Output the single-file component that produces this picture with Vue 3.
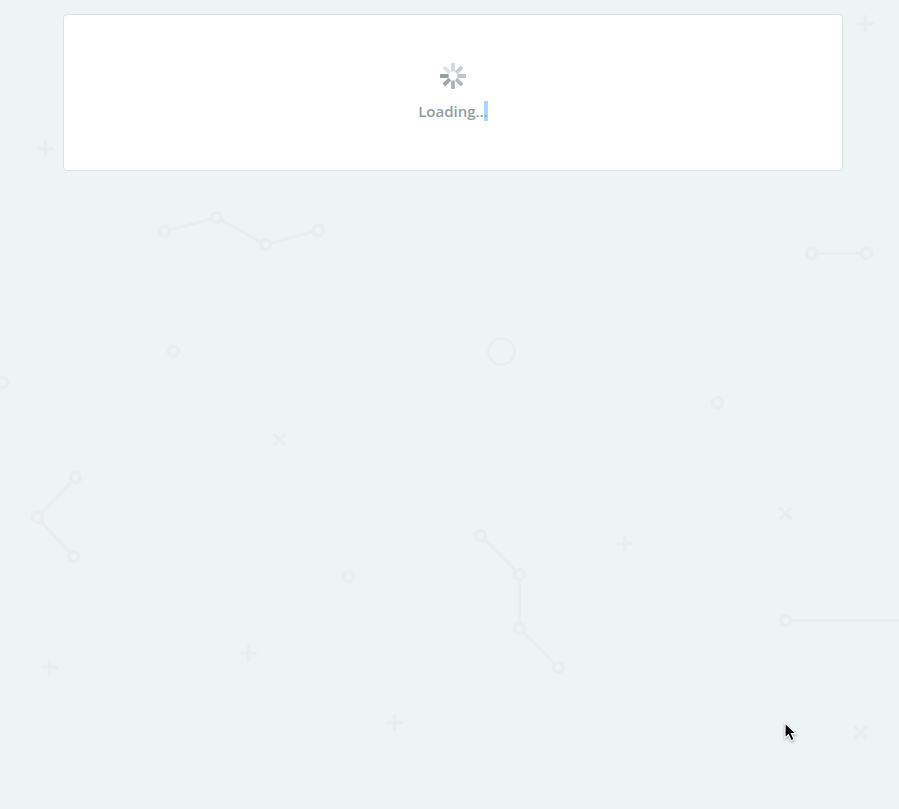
<script setup>
const chains = [
  [[164, 231], [216, 217], [265, 244], [318, 230]],
  [[811, 253], [866, 253]],
  [[75, 477], [37, 517], [73, 556]],
  [[480, 535], [519, 574], [519, 628], [558, 667]],
  [[785, 620], [920, 620]],
  [[173, 351]],
  [[2, 382]],
  [[717, 402]],
  [[348, 576]],
]
const segments = chains.flatMap((points) =>
  points.slice(1).map(([x2, y2], i) => {
    const [x1, y1] = points[i]
    const length = Math.hypot(x2 - x1, y2 - y1)
    const dx = ((x2 - x1) / length) * 6
    const dy = ((y2 - y1) / length) * 6
    return { x1: x1 + dx, y1: y1 + dy, x2: x2 - dx, y2: y2 - dy }
  })
)
const nodes = chains.flat()
const pluses = [[865, 23], [45, 148], [624, 543], [248, 653], [49, 667], [394, 722]]
const crosses = [[279, 439], [785, 513], [860, 732]]
const spokes = ['#d6dadc', '#c9ced1', '#bfc5c8', '#b2babd', '#a9b2b5', '#9ea8ac', '#929da1', '#dfe3e4']
</script>

<template>
  <main class="page">
    <svg class="pattern" aria-hidden="true">
      <g transform="translate(.5 .5)">
        <line v-for="(s, i) in segments" :key="'s' + i" v-bind="s" />
        <circle v-for="([x, y], i) in nodes" :key="'n' + i" :cx="x" :cy="y" r="5" class="node" />
        <circle cx="501" cy="351" r="13" />
        <path v-for="([x, y], i) in pluses" :key="'p' + i" class="mark" :d="`M${x - 7} ${y}h14M${x} ${y - 7}v14`" />
        <path v-for="([x, y], i) in crosses" :key="'x' + i" class="mark" :d="`M${x - 5} ${y - 5}l10 10M${x + 5} ${y - 5}l-10 10`" />
      </g>
    </svg>

    <section class="card" role="status">
      <svg class="spinner" viewBox="0 0 26 26" aria-hidden="true">
        <rect
          v-for="(color, i) in spokes"
          :key="i"
          x="11.1"
          y="0"
          width="3.8"
          height="8.6"
          rx="0.7"
          :fill="color"
          :transform="`rotate(${i * 45} 13 13)`"
        />
      </svg>
      <p class="message">Loading..<span class="selected">.</span></p>
    </section>

    <svg class="cursor" viewBox="0 0 14 22" aria-hidden="true">
      <path d="M1 1v15l3.5-3.2 2.6 6 3-1.3-2.6-5.8h4.7z" fill="#000" stroke="#fff" stroke-width="1.2" />
    </svg>
  </main>
</template>

<style>
body {
  margin: 0;
  background: #eef3f4;
}
</style>

<style scoped>
.page {
  position: relative;
  box-sizing: border-box;
  min-height: 100vh;
  padding: 14px 56px 14px 63px;
  overflow: hidden;
  font-family: "Open Sans", "Noto Sans", sans-serif;
}
.pattern {
  position: absolute;
  top: 0;
  left: 0;
  width: 100%;
  height: 100%;
  fill: none;
  stroke: #e9eded;
  stroke-width: 3;
}
.node {
  stroke-width: 3.6;
}
.mark {
  stroke-width: 3.4;
  stroke-linecap: round;
}
.card {
  position: relative;
  display: flex;
  flex-direction: column;
  align-items: center;
  gap: 12px;
  max-width: 778px;
  margin: 0 auto;
  padding: 48px 0 49px;
  background: #fff;
  border: 1px solid #dbe1e3;
  border-radius: 4px;
}
.spinner {
  width: 26px;
  height: 26px;
}
.message {
  margin: 0;
  color: #929da1;
  font-size: 15px;
  font-weight: 600;
  line-height: 20px;
}
.selected {
  display: inline-block;
  background: #acd5fe;
}
.cursor {
  position: absolute;
  top: 722px;
  left: 784px;
  width: 14px;
  height: 22px;
  filter: drop-shadow(0 1px 1px rgba(0, 0, 0, 0.35));
}
</style>
